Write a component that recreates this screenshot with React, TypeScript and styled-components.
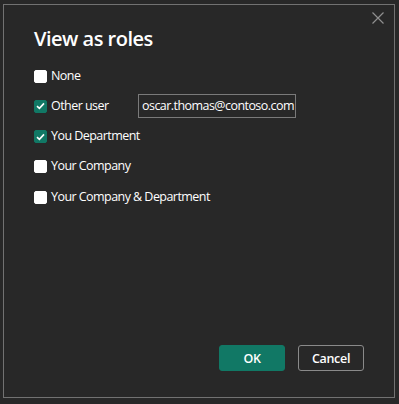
import styled, { createGlobalStyle } from "styled-components";

const GlobalStyle = createGlobalStyle`
  body {
    margin: 0;
    background: #282828;
    font-family: "Open Sans", "Liberation Sans", sans-serif;
    color: #ffffff;
  }
`;

const Page = styled.div`
  width: 399px;
  height: 404px;
  padding: 4px 0 0 3px;
  box-sizing: border-box;
`;

const Dialog = styled.div`
  position: relative;
  width: 392px;
  height: 394px;
  box-sizing: border-box;
  border: 1px solid #727272;
  background: #282828;
  display: flex;
  flex-direction: column;
  padding: 20px 30px 26px 30px;
`;

const Title = styled.h1`
  margin: 0 0 11px;
  font-size: 20px;
  font-weight: 600;
  line-height: 28px;
  letter-spacing: -0.5px;
`;

const CloseButton = styled.button`
  position: absolute;
  top: 3px;
  right: 6px;
  width: 20px;
  height: 20px;
  padding: 0;
  border: none;
  background: none;
  display: flex;
  align-items: center;
  justify-content: center;
`;

const Options = styled.div`
  display: flex;
  flex-direction: column;
  gap: 6.25px;
`;

const Row = styled.div`
  display: flex;
  align-items: center;
  height: 24px;
`;

const Check = styled.span<{ checked?: boolean }>`
  width: 13px;
  height: 13px;
  box-sizing: border-box;
  border-radius: 2px;
  background: ${(p) => (p.checked ? "#117865" : "#ffffff")};
  border: 1px solid ${(p) => (p.checked ? "#117865" : "#ffffff")};
  display: flex;
  align-items: center;
  justify-content: center;
  margin-right: 4px;
`;

const Label = styled.span<{ w?: number }>`
  font-size: 12.5px;
  letter-spacing: -0.55px;
  color: #ffffff;
  width: ${(p) => (p.w ? p.w + "px" : "auto")};
  position: relative;
  top: -1px;
`;

const EmailInput = styled.div`
  width: 158px;
  height: 24px;
  box-sizing: border-box;
  border: 1px solid #7a7a7a;
  font-size: 12.5px;
  letter-spacing: -0.55px;
  line-height: 21px;
  padding: 0 3px;
  color: #ffffff;
  white-space: nowrap;
`;

const Footer = styled.div`
  margin-top: auto;
  display: flex;
  justify-content: flex-end;
  gap: 13px;
`;

const Button = styled.button<{ primary?: boolean }>`
  width: 66px;
  height: 26px;
  box-sizing: border-box;
  border-radius: 3px;
  font-family: "Open Sans", "Liberation Sans", sans-serif;
  font-size: 12.5px;
  font-weight: 600;
  letter-spacing: -0.3px;
  color: #ffffff;
  background: ${(p) => (p.primary ? "#117865" : "transparent")};
  border: 1px solid ${(p) => (p.primary ? "#117865" : "#8a8a8a")};
`;

const Tick = () => (
  <svg width="9" height="8" viewBox="0 0 9 8">
    <path d="M1 4.2 L3.4 6.4 L8 1.4" stroke="#fff" strokeWidth="1.6" fill="none" />
  </svg>
);

const options = [
  { label: "None", checked: false },
  { label: "Other user", checked: true, input: "oscar.thomas@contoso.com" },
  { label: "You Department", checked: true },
  { label: "Your Company", checked: false },
  { label: "Your Company & Department", checked: false },
];

export default function App() {
  return (
    <>
      <GlobalStyle />
      <Page>
        <Dialog>
          <CloseButton aria-label="Close">
            <svg width="12" height="12" viewBox="0 0 12 12">
              <path d="M0.5 0.5 L11.5 11.5 M11.5 0.5 L0.5 11.5" stroke="#8f8f8f" strokeWidth="1.2" />
            </svg>
          </CloseButton>
          <Title>View as roles</Title>
          <Options>
            {options.map((o) => (
              <Row key={o.label}>
                <Check checked={o.checked}>{o.checked ? <Tick /> : null}</Check>
                <Label w={o.input ? 87 : undefined}>{o.label}</Label>
                {o.input ? <EmailInput>{o.input}</EmailInput> : null}
              </Row>
            ))}
          </Options>
          <Footer>
            <Button primary>OK</Button>
            <Button>Cancel</Button>
          </Footer>
        </Dialog>
      </Page>
    </>
  );
}
